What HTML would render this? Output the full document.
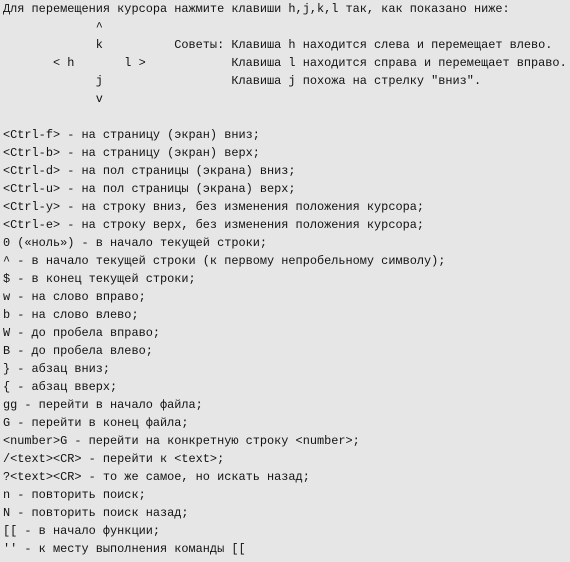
<!DOCTYPE html>
<html><head><meta charset="utf-8"><style>
html,body{margin:0;padding:0;background:#e6e6e6;width:570px;height:562px;overflow:hidden}
pre{margin:0;padding:0 0 0 3px;font-family:"Liberation Mono","DejaVu Sans Mono",monospace;font-size:11.9px;line-height:18px;color:#111}
</style></head><body><pre>Для перемещения курсора нажмите клавиши h,j,k,l так, как показано ниже:
             ^
             k          Советы: Клавиша h находится слева и перемещает влево.
       < h       l >            Клавиша l находится справа и перемещает вправо.
             j                  Клавиша j похожа на стрелку "вниз".
             v

&lt;Ctrl-f&gt; - на страницу (экран) вниз;
&lt;Ctrl-b&gt; - на страницу (экран) верх;
&lt;Ctrl-d&gt; - на пол страницы (экрана) вниз;
&lt;Ctrl-u&gt; - на пол страницы (экрана) верх;
&lt;Ctrl-y&gt; - на строку вниз, без изменения положения курсора;
&lt;Ctrl-e&gt; - на строку верх, без изменения положения курсора;
0 («ноль») - в начало текущей строки;
^ - в начало текущей строки (к первому непробельному символу);
$ - в конец текущей строки;
w - на слово вправо;
b - на слово влево;
W - до пробела вправо;
B - до пробела влево;
} - абзац вниз;
{ - абзац вверх;
gg - перейти в начало файла;
G - перейти в конец файла;
&lt;number&gt;G - перейти на конкретную строку &lt;number&gt;;
/&lt;text&gt;&lt;CR&gt; - перейти к &lt;text&gt;;
?&lt;text&gt;&lt;CR&gt; - то же самое, но искать назад;
n - повторить поиск;
N - повторить поиск назад;
[[ - в начало функции;
'' - к месту выполнения команды [[
</pre></body></html>
